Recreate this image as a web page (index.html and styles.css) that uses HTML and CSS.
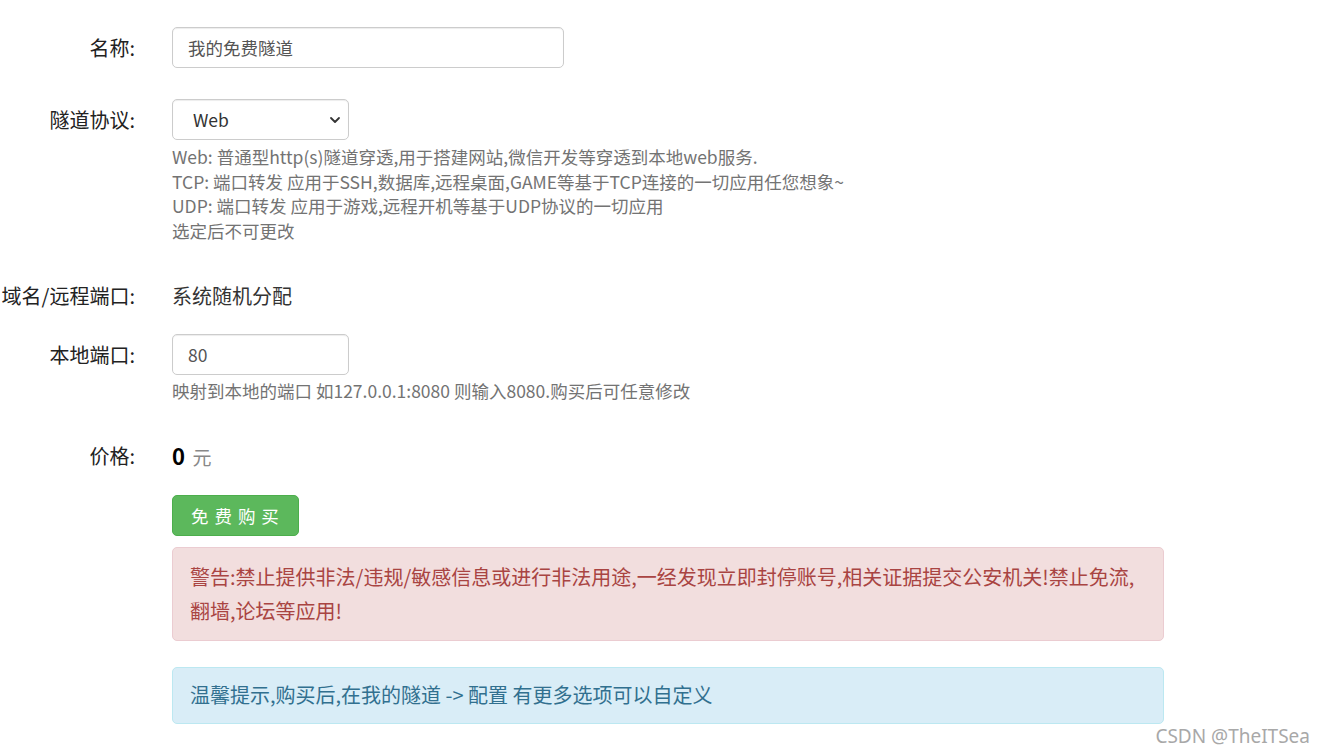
FILE: index.html
```html
<!DOCTYPE html>
<html lang="zh-CN">
<head>
    <meta charset="UTF-8">
    <meta name="viewport" content="width=device-width, initial-scale=1.0">
    <title>购买隧道</title>
    <link rel="stylesheet" href="styles.css">
</head>
<body>
    <form class="tunnel-form" onsubmit="return false;">
        <!-- 名称 -->
        <div class="form-row row-name">
            <label class="row-label">名称:</label>
            <div class="row-body">
                <input type="text" class="field field-wide" value="我的免费隧道">
            </div>
        </div>

        <!-- 协议 -->
        <div class="form-row row-proto">
            <label class="row-label">隧道协议:</label>
            <div class="row-body">
                <div class="select-wrap">
                    <select class="field field-select">
                        <option>Web</option>
                        <option>TCP</option>
                        <option>UDP</option>
                    </select>
                    <svg class="select-arrow" width="12" height="8" viewBox="0 0 12 8">
                        <path d="M2 2 L6 6 L10 2" fill="none" stroke="#333" stroke-width="1.8" stroke-linecap="round" stroke-linejoin="round"/>
                    </svg>
                </div>
                <div class="help">
                    Web: 普通型http(s)隧道穿透,用于搭建网站,微信开发等穿透到本地web服务.<br>
                    TCP: 端口转发 应用于SSH,数据库,远程桌面,GAME等基于TCP连接的一切应用任您想象~<br>
                    UDP: 端口转发 应用于游戏,远程开机等基于UDP协议的一切应用<br>
                    选定后不可更改
                </div>
            </div>
        </div>

        <!-- 域名 -->
        <div class="form-row row-domain">
            <label class="row-label">域名/远程端口:</label>
            <div class="row-body">
                <p class="static-text">系统随机分配</p>
            </div>
        </div>

        <!-- 本地端口 -->
        <div class="form-row row-port">
            <label class="row-label">本地端口:</label>
            <div class="row-body">
                <input type="text" class="field field-short" value="80">
                <div class="help help-port">映射到本地的端口 如127.0.0.1:8080 则输入8080.购买后可任意修改</div>
            </div>
        </div>

        <!-- 价格 -->
        <div class="form-row row-price">
            <label class="row-label">价格:</label>
            <div class="row-body">
                <p class="static-text"><span class="price">0</span> <span class="unit">元</span></p>
            </div>
        </div>

        <div class="form-row row-actions">
            <span class="row-label"></span>
            <div class="row-body">
                <button class="btn-buy" type="submit">免 费 购 买</button>
                <div class="alert alert-danger">警告:禁止提供非法/违规/敏感信息或进行非法用途,一经发现立即封停账号,相关证据提交公安机关!禁止免流,翻墙,论坛等应用!</div>
                <div class="alert alert-info">温馨提示,购买后,在我的隧道 -&gt; 配置 有更多选项可以自定义</div>
            </div>
        </div>
    </form>

    <div class="watermark">CSDN @TheITSea</div>
</body>
</html>
```

FILE: styles.css
```css
body {
    margin: 0;
    font-family: "Noto Sans CJK SC", "Noto Sans", sans-serif;
    font-size: 17.5px;
    color: #333333;
    background: #ffffff;
}
.tunnel-form {
    padding-top: 27px;
    width: 1164px;
}
.form-row {
    display: grid;
    grid-template-columns: 135px 992px;
    column-gap: 37px;
}
.row-label {
    display: flex;
    justify-content: flex-end;
    white-space: nowrap;
    height: 41px;
    line-height: 41px;
    font-size: 20px;
    color: #222222;
}
.row-name {
    margin-bottom: 31px;
}
.row-proto {
    margin-bottom: 31px;
}
.row-domain {
    margin-bottom: 18px;
}
.row-port {
    margin-bottom: 31px;
}
.row-price {
    margin-bottom: 19px;
}
.field {
    box-sizing: border-box;
    height: 41px;
    border: 1px solid #cccccc;
    border-radius: 5px;
    padding: 0 15px;
    font-family: inherit;
    font-size: 17.5px;
    color: #555555;
    background: #ffffff;
    box-shadow: inset 0 1px 1px rgba(0, 0, 0, 0.075);
    outline: none;
}
.field-wide {
    width: 392px;
}
.field-short {
    width: 177px;
}
.select-wrap {
    position: relative;
    width: 177px;
}
.field-select {
    width: 177px;
    padding-left: 20px;
    appearance: none;
    -webkit-appearance: none;
    color: #333333;
}
.select-arrow {
    position: absolute;
    right: 8px;
    top: 17px;
    pointer-events: none;
}
.help {
    margin-top: 5px;
    line-height: 24.7px;
    color: #737373;
}
.help-port {
    margin-top: 4px;
}
.static-text {
    margin: 0;
    height: 41px;
    line-height: 41px;
    font-size: 20px;
    color: #333333;
}
.price {
    font-size: 22px;
    font-weight: bold;
    color: #000000;
}
.unit {
    font-size: 19px;
    color: #888888;
    margin-left: 3px;
}
.btn-buy {
    display: block;
    width: 127px;
    height: 41px;
    background-color: #5cb85c;
    border: 1px solid #4cae4c;
    border-radius: 5px;
    color: #ffffff;
    font-family: inherit;
    font-size: 17.5px;
    letter-spacing: 1px;
    cursor: pointer;
}
.alert {
    border: 1px solid transparent;
    border-radius: 5px;
    padding: 12px 17px;
    font-size: 20px;
    line-height: 34px;
}
.alert-danger {
    margin-top: 11px;
    background-color: #f2dede;
    border-color: #ebccd1;
    color: #a94442;
}
.alert-info {
    margin-top: 26px;
    padding-top: 10px;
    padding-bottom: 11px;
    background-color: #d9edf7;
    border-color: #bce8f1;
    color: #31708f;
}
.watermark {
    position: absolute;
    right: 15px;
    top: 723px;
    font-family: "Noto Sans", sans-serif;
    font-size: 19px;
    color: #a8a8a8;
}
```
